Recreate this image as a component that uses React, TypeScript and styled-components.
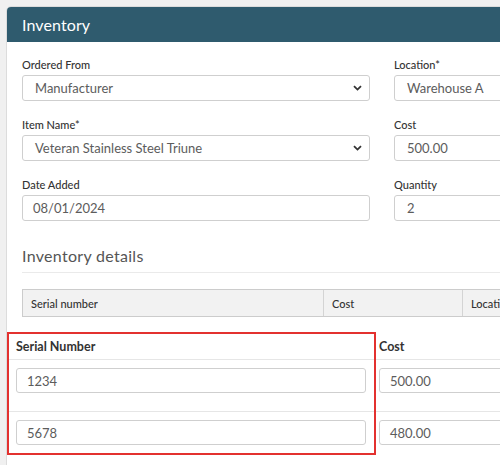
import React from "react";
import styled, { createGlobalStyle } from "styled-components";

const GlobalStyle = createGlobalStyle`
  html, body {
    margin: 0;
    padding: 0;
    background: #f0f0f0;
    overflow: hidden;
    font-family: Lato, "Open Sans", Arial, sans-serif;
  }
`;

const Page = styled.div`
  width: 500px;
  height: 465px;
  padding: 6px 0 0 6px;
  box-sizing: border-box;
  overflow: hidden;
`;

const Card = styled.section`
  width: 640px;
  height: 600px;
  background: #fff;
  border: 1px solid #dcdcdc;
  border-radius: 5px 5px 0 0;
  overflow: hidden;
`;

const CardHeader = styled.header`
  height: 35px;
  background: #2f5b6e;
  color: #fff;
  display: flex;
  align-items: center;
  padding-left: 15px;
  font-size: 16px;
  letter-spacing: 0.1px;
`;

const CardBody = styled.div`
  padding: 17px 0 0 15px;
`;

const FormGrid = styled.div`
  display: grid;
  grid-template-columns: 348px 240px;
  column-gap: 24px;
  row-gap: 18px;
`;

const Field = styled.div`
  display: flex;
  flex-direction: column;
`;

const Label = styled.label`
  height: 16px;
  font-size: 11px;
  font-weight: 500;
  color: #333;
  line-height: 12px;
`;

const Control = styled.div`
  height: 26px;
  box-sizing: border-box;
  border: 1px solid #cfcfcf;
  border-radius: 3px;
  display: flex;
  align-items: center;
  justify-content: space-between;
  padding: 0 7px 0 12px;
  font-size: 13px;
  color: #5c5c5c;
  background: #fff;
`;

const DateControl = styled(Control)`
  padding-left: 10px;
`;

const Chevron = () => (
  <svg width="9" height="6" viewBox="0 0 9 6">
    <path d="M1 1.2 L4.5 4.6 L8 1.2" fill="none" stroke="#333" strokeWidth="1.8" />
  </svg>
);

const SectionTitle = styled.h2`
  margin: 25px 0 0;
  font-size: 16px;
  font-weight: 400;
  color: #555;
  letter-spacing: 0.3px;
  padding-bottom: 7px;
  border-bottom: 1px solid #eaeaea;
  width: 620px;
`;

const ListHead = styled.div`
  margin-top: 16px;
  display: grid;
  grid-template-columns: 300px 139px 200px;
  height: 28px;
  background: #f2f2f2;
  border: 1px solid #cccccc;
  box-sizing: border-box;
`;

const HeadCell = styled.div<{ $first?: boolean }>`
  display: flex;
  align-items: center;
  padding-left: 8px;
  font-size: 11px;
  font-weight: 500;
  color: #333;
  border-left: ${(p) => (p.$first ? "none" : "1px solid #d4d4d4")};
`;

const Details = styled.div`
  position: relative;
  margin: 15px 0 0 -15px;
  display: grid;
  grid-template-columns: 368px 260px;
`;

const DetailHead = styled.div<{ $first?: boolean }>`
  height: 28px;
  box-sizing: border-box;
  display: flex;
  align-items: center;
  padding-left: ${(p) => (p.$first ? "9px" : "4px")};
  padding-top: 1px;
  font-size: 12.5px;
  font-weight: 700;
  color: #333;
  border-bottom: 1px solid #e6e6e6;
`;

const DetailCell = styled.div<{ $first?: boolean; $last?: boolean }>`
  box-sizing: border-box;
  height: ${(p) => (p.$last ? "41px" : "52px")};
  padding: ${(p) => (p.$first ? "8px 9px 0 9px" : "8px 0 0 4px")};
  border-bottom: ${(p) => (p.$last ? "none" : "1px solid #e6e6e6")};
`;

const TextBox = styled(Control)`
  height: 25px;
  padding-left: 10px;
`;

const Highlight = styled.div`
  position: absolute;
  left: 0;
  top: 0;
  width: 369px;
  height: 123px;
  box-sizing: border-box;
  border: 2.5px solid #e3312f;
  pointer-events: none;
`;

const rows = [
  { serial: "1234", cost: "500.00" },
  { serial: "5678", cost: "480.00" },
];

const App = () => {
  return (
    <Page>
      <GlobalStyle />
      <Card>
        <CardHeader>Inventory</CardHeader>
        <CardBody>
          <FormGrid>
            <Field>
              <Label>Ordered From</Label>
              <Control>
                Manufacturer
                <Chevron />
              </Control>
            </Field>
            <Field>
              <Label>Location*</Label>
              <Control>Warehouse A</Control>
            </Field>
            <Field>
              <Label>Item Name*</Label>
              <Control>
                Veteran Stainless Steel Triune
                <Chevron />
              </Control>
            </Field>
            <Field>
              <Label>Cost</Label>
              <Control>500.00</Control>
            </Field>
            <Field>
              <Label>Date Added</Label>
              <DateControl>08/01/2024</DateControl>
            </Field>
            <Field>
              <Label>Quantity</Label>
              <Control>2</Control>
            </Field>
          </FormGrid>

          <SectionTitle>Inventory details</SectionTitle>

          <ListHead>
            <HeadCell $first>Serial number</HeadCell>
            <HeadCell>Cost</HeadCell>
            <HeadCell>Location</HeadCell>
          </ListHead>

          <Details>
            <DetailHead $first>Serial Number</DetailHead>
            <DetailHead>Cost</DetailHead>
            {rows.map((r, i) => (
              <React.Fragment key={r.serial}>
                <DetailCell $first $last={i === rows.length - 1}>
                  <TextBox>{r.serial}</TextBox>
                </DetailCell>
                <DetailCell $last={i === rows.length - 1}>
                  <TextBox>{r.cost}</TextBox>
                </DetailCell>
              </React.Fragment>
            ))}
            <Highlight />
          </Details>
        </CardBody>
      </Card>
    </Page>
  );
};

export default App;
